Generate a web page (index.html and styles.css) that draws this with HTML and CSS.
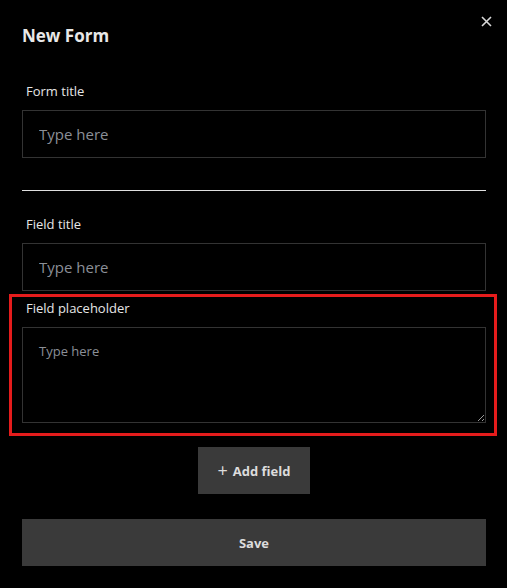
FILE: index.html
```html
<!DOCTYPE html>
<html>
<head>
<meta charset="utf-8">
<link rel="stylesheet" href="styles.css">
</head>
<body>
<div class="modal">
  <button class="close" aria-label="Close">
    <svg width="11" height="11" viewBox="0 0 11 11"><path d="M1 1L10 10M10 1L1 10" stroke="#d8d8d8" stroke-width="1.6" fill="none"/></svg>
  </button>
  <h1 class="title">New Form</h1>
  <div class="group group-first">
    <label class="label">Form title</label>
    <input class="input" type="text" placeholder="Type here">
  </div>
  <hr class="divider">
  <div class="group">
    <label class="label">Field title</label>
    <input class="input" type="text" placeholder="Type here">
  </div>
  <div class="group highlight">
    <label class="label">Field placeholder</label>
    <textarea class="textarea" placeholder="Type here"></textarea>
  </div>
  <div class="add-row">
    <button class="btn btn-add"><span class="plus">+</span> Add field</button>
  </div>
  <button class="btn btn-save">Save</button>
</div>
</body>
</html>
```
FILE: styles.css
```css
* { box-sizing: border-box; }
html, body { margin: 0; padding: 0; background: #000; }
body { font-family: "Open Sans", "Noto Sans", sans-serif; color: #e6e6e6; }
.modal { position: relative; width: 507px; height: 588px; padding: 24px 21px 0 22px; }
.close { position: absolute; top: 16px; right: 15px; width: 11px; height: 11px; padding: 0; border: 0; background: transparent; display: flex; }
.title { margin: 0; font-size: 17px; font-weight: 700; line-height: 24px; color: #e8e8e8; }
.group { display: flex; flex-direction: column; }
.group-first { margin-top: 34px; }
.label { font-size: 13px; line-height: 18px; color: #e6e6e6; padding-left: 4px; margin-bottom: 10px; }
.input { width: 464px; height: 48px; background: #000; border: 1px solid #333; color: #ddd; font-family: inherit; font-size: 15px; padding: 0 16px; outline: none; }
.input::placeholder { color: #8b8f97; }
.divider { margin: 32px 0 0; width: 464px; border: 0; border-top: 1px solid #e0e0e0; height: 0; }
.divider + .group { margin-top: 24px; }
.highlight { margin: 3px -13px 0; padding: 2px 10px 10px; border: 3px solid #e51c1c; width: 488px; }
.textarea { width: 464px; height: 96px; background: #000; border: 1px solid #333; color: #ddd; font-family: inherit; font-size: 13px; padding: 14px 16px; outline: none; resize: vertical; }
.textarea::placeholder { color: #8b8f97; }
.add-row { display: flex; justify-content: center; margin-top: 11px; width: 464px; }
.btn { border: 0; background: #3a3a3a; color: #dcdcdc; font-family: inherit; font-weight: 700; font-size: 13px; cursor: pointer; }
.btn-add { width: 112px; height: 47px; display: flex; align-items: center; justify-content: center; gap: 5px; }
.plus { font-weight: 400; font-size: 18px; line-height: 1; margin-top: -2px; }
.btn-save { display: block; margin-top: 25px; width: 464px; height: 47px; }
```
